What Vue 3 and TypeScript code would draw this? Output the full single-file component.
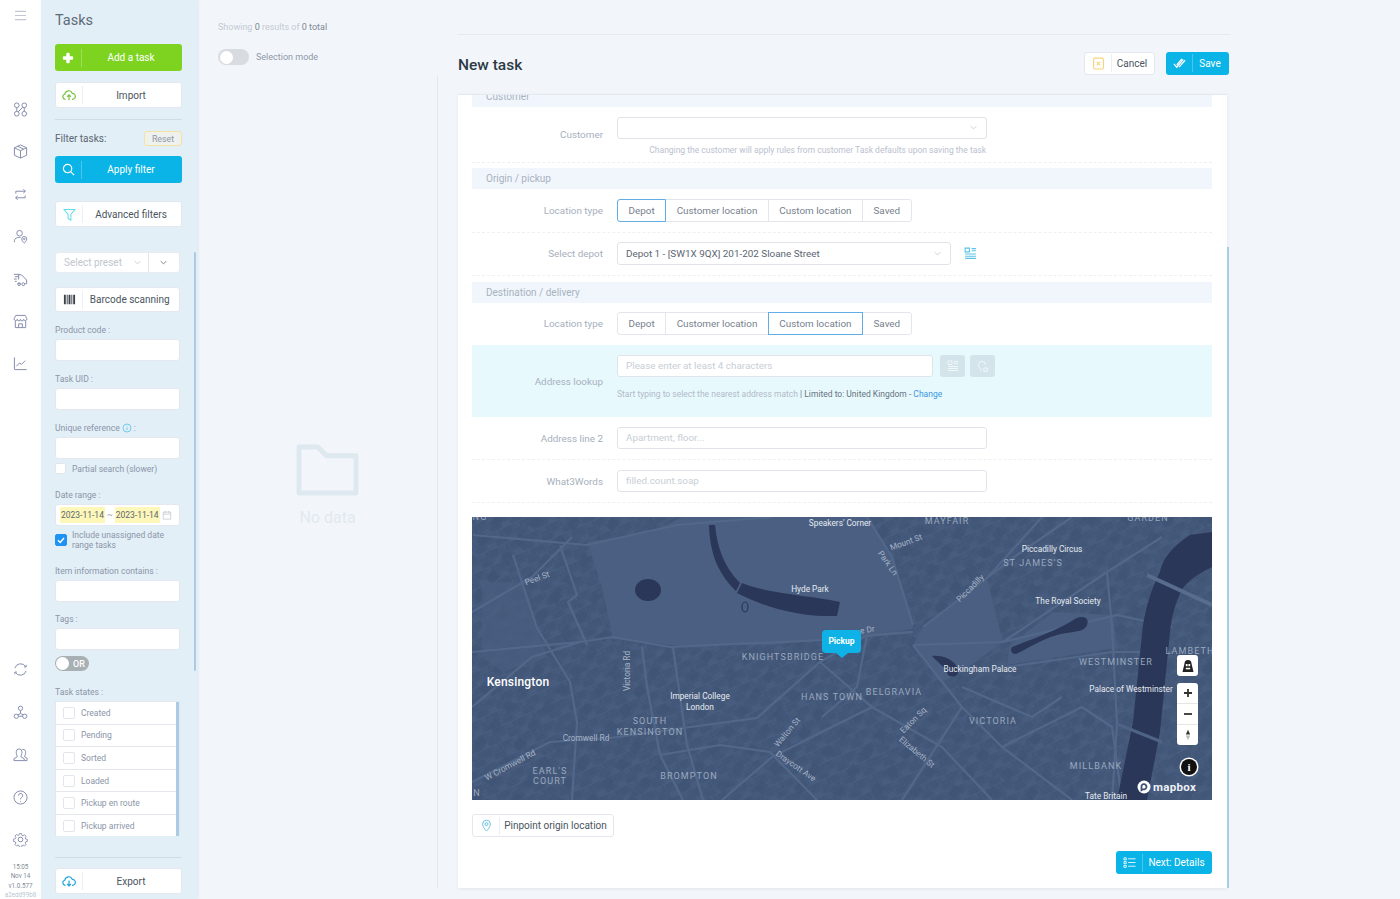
<script setup lang="ts">
interface MapLabel {
  t: string
  x: number
  y: number
  rot?: number
  kind?: 'poi' | 'area' | 'road' | 'big'
}

const states = ['Created', 'Pending', 'Sorted', 'Loaded', 'Pickup en route', 'Pickup arrived']

// Coordinates are page positions, the map starts at 472,517
const labels: MapLabel[] = [
  { t: "Speakers' Corner", x: 840, y: 523, kind: 'poi' },
  { t: 'MAYFAIR', x: 947, y: 521, kind: 'area' },
  { t: 'GARDEN', x: 1148, y: 518, kind: 'area' },
  { t: 'Mount St', x: 906, y: 542, rot: -20, kind: 'road' },
  { t: 'Piccadilly Circus', x: 1052, y: 549, kind: 'poi' },
  { t: "ST JAMES'S", x: 1033, y: 563, kind: 'area' },
  { t: 'Peel St', x: 537, y: 578, rot: -20, kind: 'road' },
  { t: 'Park Ln', x: 888, y: 563, rot: 55, kind: 'road' },
  { t: 'Piccadilly', x: 970, y: 588, rot: -45, kind: 'road' },
  { t: 'Hyde Park', x: 810, y: 589, kind: 'poi' },
  { t: 'The Royal Society', x: 1068, y: 601, kind: 'poi' },
  { t: 'ne Dr', x: 865, y: 630, rot: -10, kind: 'road' },
  { t: 'KNIGHTSBRIDGE', x: 783, y: 657, kind: 'area' },
  { t: 'LAMBETH', x: 1190, y: 651, kind: 'area' },
  { t: 'WESTMINSTER', x: 1116, y: 662, kind: 'area' },
  { t: 'Buckingham Palace', x: 980, y: 669, kind: 'poi' },
  { t: 'Victoria Rd', x: 627, y: 671, rot: -90, kind: 'road' },
  { t: 'Kensington', x: 518, y: 682, kind: 'big' },
  { t: 'Palace of Westminster', x: 1131, y: 689, kind: 'poi' },
  { t: 'Imperial College', x: 700, y: 696, kind: 'poi' },
  { t: 'London', x: 700, y: 707, kind: 'poi' },
  { t: 'HANS TOWN', x: 832, y: 697, kind: 'area' },
  { t: 'BELGRAVIA', x: 894, y: 692, kind: 'area' },
  { t: 'SOUTH', x: 650, y: 721, kind: 'area' },
  { t: 'KENSINGTON', x: 650, y: 732, kind: 'area' },
  { t: 'Cromwell Rd', x: 586, y: 738, kind: 'road' },
  { t: 'Eaton Sq', x: 913, y: 720, rot: -45, kind: 'road' },
  { t: 'VICTORIA', x: 993, y: 721, kind: 'area' },
  { t: 'Walton St', x: 787, y: 732, rot: -50, kind: 'road' },
  { t: 'Elizabeth St', x: 917, y: 752, rot: 40, kind: 'road' },
  { t: 'Draycott Ave', x: 796, y: 766, rot: 35, kind: 'road' },
  { t: 'W Cromwell Rd', x: 510, y: 765, rot: -28, kind: 'road' },
  { t: "EARL'S", x: 550, y: 771, kind: 'area' },
  { t: 'COURT', x: 550, y: 781, kind: 'area' },
  { t: 'BROMPTON', x: 689, y: 776, kind: 'area' },
  { t: 'MILLBANK', x: 1096, y: 766, kind: 'area' },
  { t: 'Tate Britain', x: 1106, y: 796, kind: 'poi' },
  { t: 'N', x: 477, y: 793, kind: 'area' },
  { t: 'NG', x: 480, y: 517, kind: 'area' }
]

const labelStyle = (l: MapLabel) => ({
  left: `${l.x - 472}px`,
  top: `${l.y - 517}px`,
  transform: `translate(-50%, -50%) rotate(${l.rot ?? 0}deg)`
})

const roads = [
  'M0,135 L108,125 L141,120 L198,130 L351,123 L441,115',
  'M201,131 L215,228 L231,283',
  'M170,130 L175,170 L188,238 L211,283',
  'M0,265 L78,225 L138,221 L211,211 L285,201 L348,145 L395,118 L441,115',
  'M188,238 L248,228 L298,235 L345,283',
  'M41,38 L65,111 L98,165 L105,205 L100,283',
  'M88,28 L105,78 L96,85 L115,128',
  'M1,18 L115,28 L205,8 L300,0',
  'M0,190 L60,140 L108,125',
  'M441,108 L420,40 L395,0',
  'M451,110 L515,61 L545,38 L600,0',
  'M441,128 L531,125 L645,98 L700,110',
  'M531,125 L635,55 L690,20',
  'M535,150 L640,135 L700,135',
  'M441,128 L490,190 L530,230 L600,283',
  'M490,170 L560,200 L590,180',
  'M530,230 L610,190 L640,210 L650,283',
  'M348,145 L400,190 L470,230 L520,283',
  'M395,118 L385,170 L350,200',
  'M0,95 L60,60 L100,20',
  'M250,283 L300,240 L400,190',
  'M430,283 L490,190',
  'M515,61 L570,0',
  'M635,55 L640,110 L645,207 L640,283'
]
</script>

<template>
  <div class="page">
    <!-- Nav -->
    <nav class="nav">
      <svg class="nav-burger" viewBox="0 0 14 12"><path d="M1 1.5h12M1 6h12M1 10.5h12" /></svg>
      <div class="nav-group">
        <svg viewBox="0 0 16 16"><circle cx="4" cy="3.5" r="2.5" /><circle cx="12" cy="3.5" r="2.5" /><circle cx="4" cy="12.5" r="2.5" /><circle cx="12" cy="12.5" r="2.5" /><path d="M4 6v4M10.5 5.5l-5 5M12 6v4" /></svg>
        <svg viewBox="0 0 16 16"><path d="M8 1l6.5 3v8L8 15l-6.5-3V4zM1.500 4L8 7.200 14.500 4M8 7.200V15M5 2.400l6.500 3.100" /></svg>
        <svg viewBox="0 0 16 16"><path d="M3 7V4.500h10M11 2.500l2.300 2-2.300 2M13 9v2.500H3M5 13.500l-2.300-2 2.300-2" /></svg>
        <svg viewBox="0 0 16 16"><circle cx="7" cy="4.500" r="3" /><path d="M1.500 14v-1.500C1.500 10 4 9 7 9h1" /><path d="M12 15s-2.700-2.300-2.700-4.300a2.700 2.700 0 0 1 5.400 0c0 2-2.700 4.300-2.700 4.300z" /><circle cx="12" cy="10.700" r=".8" /></svg>
        <svg viewBox="0 0 16 16"><path d="M1 2.500h6M2 5h4M1 7.500h3M2 10h2M6 3h3l5.500 5.500v4H13M5 12.500h3M6 3v5" /><circle cx="6.500" cy="13" r="1.500" /><circle cx="11" cy="13" r="1.500" /></svg>
        <svg viewBox="0 0 16 16"><path d="M3 1.500h10l1.800 3.500a1.600 1.600 0 0 1-3.400.6 1.700 1.700 0 0 1-3.400 0 1.700 1.700 0 0 1-3.400 0 1.600 1.600 0 0 1-3.400-.6zM2.500 7.500V14.500h11V7.500M6 14v-3.500h4V14" /></svg>
        <svg viewBox="0 0 16 16"><path d="M1.500 1.500V14.500H14.500M3.500 11l3.500-3.500 2 1.500 4-4" /></svg>
      </div>
      <div class="nav-group nav-bottom">
        <svg viewBox="0 0 16 16"><path d="M2 6.500A6.300 6.300 0 0 1 13.500 5M14 9.500A6.300 6.300 0 0 1 2.500 11" /><path d="M11.800 5.300h2.200V3M4.200 10.700H2V13" /></svg>
        <svg viewBox="0 0 16 16"><circle cx="8" cy="3.500" r="2.300" /><circle cx="3.500" cy="12" r="2.300" /><circle cx="12.500" cy="12" r="2.300" /><path d="M8 6v3M5.800 12h4.400M8 9l-2.800 1.500M8 9l2.800 1.500" /></svg>
        <svg viewBox="0 0 16 16"><path d="M1 14.500v-2l3.500-2v-1C3.500 8 3.500 6.500 3.500 5a3 3 0 0 1 6 0c0 1.500 0 3-1 4.500v1l3.500 2v2zM10 2.500a3 3 0 0 1 3.500 2.500c0 1.500 0 3-1 4.500v1l2.500 1.500v2.500h-3" /></svg>
        <svg viewBox="0 0 16 16"><circle cx="8" cy="8" r="7" /><path d="M5.800 6a2.300 2.300 0 1 1 3.400 2c-.8.500-1.200 1-1.200 2M8 11.800v.8" /></svg>
        <svg viewBox="0 0 16 16"><circle cx="8" cy="8" r="2.500" /><path d="M6.700 1h2.600l.4 2 1.400.6 1.700-1.100 1.800 1.800-1.100 1.700.6 1.400 2 .4v2.600l-2 .4-.6 1.400 1.100 1.700-1.800 1.800-1.700-1.100-1.400.6-.4 2H6.700l-.4-2-1.400-.6-1.700 1.100-1.800-1.800 1.100-1.700-.6-1.400-2-.4V7.400l2-.4.600-1.400-1.100-1.700 1.800-1.800 1.700 1.100 1.400-.6z" transform="translate(.8 .8) scale(.9)" /></svg>
      </div>
      <div class="nav-meta">
        <div>15:05</div>
        <div>Nov 14</div>
        <div>v1.0.577</div>
        <div class="nav-hash">a2edd99b8</div>
      </div>
    </nav>

    <!-- Filter sidebar -->
    <aside class="side">
      <div class="side-title">Tasks</div>
      <button class="ibtn ibtn-wide green">
        <span class="ibtn-icon"><svg viewBox="0 0 14 14"><path class="fill-white" d="M5 2a1 1 0 0 1 1-1h2a1 1 0 0 1 1 1v3h3a1 1 0 0 1 1 1v2a1 1 0 0 1-1 1H9v3a1 1 0 0 1-1 1H6a1 1 0 0 1-1-1V9H2a1 1 0 0 1-1-1V6a1 1 0 0 1 1-1h3z" /></svg></span>
        <span class="ibtn-text">Add a task</span>
      </button>
      <button class="ibtn ibtn-wide import">
        <span class="ibtn-icon icon-cloud"><svg viewBox="0 0 16 14"><path class="st-green" d="M4 12H3.500a3 3 0 0 1-.4-5.900A4.500 4.500 0 0 1 11.800 5 3.500 3.500 0 0 1 12 12h-.5M8 13V7M5.800 9L8 6.800 10.200 9" /></svg></span>
        <span class="ibtn-text">Import</span>
      </button>
      <div class="side-divider"></div>
      <div class="filter-head">
        <span>Filter tasks:</span>
        <button class="reset">Reset</button>
      </div>
      <button class="ibtn ibtn-wide blue apply">
        <span class="ibtn-icon"><svg viewBox="0 0 14 14"><circle class="st-white" cx="6" cy="6" r="4.500" /><path class="st-white" d="M9.300 9.300L13 13" /></svg></span>
        <span class="ibtn-text">Apply filter</span>
      </button>
      <button class="ibtn ibtn-wide advanced">
        <span class="ibtn-icon"><svg viewBox="0 0 14 14"><path class="st-cyan" d="M1 1.500h12L8.500 7v6l-3-1.500V7z" /></svg></span>
        <span class="ibtn-text">Advanced filters</span>
      </button>

      <div class="side-narrow">
        <div class="preset">
          <span class="preset-text">Select preset</span>
          <svg class="chev chev-light" viewBox="0 0 10 6"><path d="M1 1l4 4 4-4" /></svg>
          <span class="preset-more"><svg class="chev chev-dark" viewBox="0 0 10 6"><path d="M1 1l4 4 4-4" /></svg></span>
        </div>
        <button class="ibtn barcode">
          <span class="ibtn-icon"><svg viewBox="0 0 14 10"><path class="fill-dark" d="M1 0h2v10H1zM4 0h1v10H4zM6 0h2v10H6zM9 0h1v10H9zM11 0h2v10h-2z" /></svg></span>
          <span class="ibtn-text">Barcode scanning</span>
        </button>

        <div class="field">
          <div class="field-label">Product code<i>:</i></div>
          <div class="field-input"></div>
        </div>
        <div class="field">
          <div class="field-label">Task UID<i>:</i></div>
          <div class="field-input"></div>
        </div>
        <div class="field">
          <div class="field-label">
            Unique reference
            <svg class="info" viewBox="0 0 10 10"><circle cx="5" cy="5" r="4" /><path d="M5 4.500v2.500M5 2.700v.6" /></svg><i>:</i>
          </div>
          <div class="field-input"></div>
        </div>
        <label class="check partial"><span class="box"></span>Partial search (slower)</label>
        <div class="field date-field">
          <div class="field-label">Date range<i>:</i></div>
          <div class="field-input date-input">
            <span class="date-val">2023-11-14</span>
            <span class="date-sep">~</span>
            <span class="date-val">2023-11-14</span>
            <svg class="date-cal" viewBox="0 0 12 12"><path d="M1.500 2.500h9v8.500h-9zM1.500 5h9M4 1v2.500M8 1v2.500" /></svg>
          </div>
        </div>
        <label class="check include">
          <span class="box box-on"><svg viewBox="0 0 10 10"><path d="M2 5.200l2.200 2.200L8 3" /></svg></span>
          <span>Include unassigned date range tasks</span>
        </label>
        <div class="field item-field">
          <div class="field-label">Item information contains<i>:</i></div>
          <div class="field-input"></div>
        </div>
        <div class="field tags-field">
          <div class="field-label">Tags<i>:</i></div>
          <div class="field-input"></div>
        </div>
        <div class="or-toggle"><span class="knob"></span><span>OR</span></div>
        <div class="field states-field">
          <div class="field-label">Task states<i>:</i></div>
          <div class="states">
            <div v-for="s in states" :key="s" class="state-row">
              <span class="box"></span>{{ s }}
            </div>
            <span class="states-bar"></span>
          </div>
        </div>
      </div>

      <div class="side-divider export-divider"></div>
      <button class="ibtn ibtn-wide export">
        <span class="ibtn-icon icon-cloud"><svg viewBox="0 0 16 14"><path class="st-blue" d="M4 12H3.500a3 3 0 0 1-.4-5.900A4.500 4.500 0 0 1 11.800 5 3.500 3.500 0 0 1 12 12h-.5M8 6.500v6M5.800 10.500L8 12.700l2.200-2.200" /></svg></span>
        <span class="ibtn-text">Export</span>
      </button>
      <span class="side-scroll"></span>
    </aside>

    <!-- Results list -->
    <section class="list">
      <div class="list-count">Showing <b>0</b> results of <b>0 total</b></div>
      <div class="list-mode"><span class="toggle"><span class="knob"></span></span>Selection mode</div>
      <div class="empty">
        <svg viewBox="0 0 64 53"><path d="M3 3h19l9 9h30v38H3z" /></svg>
        <div>No data</div>
      </div>
    </section>

    <!-- Task form -->
    <main class="main">
      <div class="main-top"></div>
      <header class="main-head">
        <h1>New task</h1>
        <div class="main-actions">
          <button class="ibtn cancel">
            <span class="ibtn-icon"><svg viewBox="0 0 12 12"><rect class="st-yellow" x="1.500" y="1" width="9" height="10" rx="1" /><path class="st-yellow" d="M4.500 4.500l3 3M7.500 4.500l-3 3" /></svg></span>
            <span class="ibtn-text">Cancel</span>
          </button>
          <button class="ibtn blue save">
            <span class="ibtn-icon"><svg viewBox="0 0 14 12"><path class="st-white" d="M1 6.500L4 10 11 1.500M4 7.500L9.500 1M6.500 10L13 2.500" /></svg></span>
            <span class="ibtn-text">Save</span>
          </button>
        </div>
      </header>

      <div class="card">
        <div class="section section-clip">Customer</div>
        <div class="row row-customer">
          <label class="row-label">Customer</label>
          <div class="select select-customer">
            <svg class="chev chev-light" viewBox="0 0 10 6"><path d="M1 1l4 4 4-4" /></svg>
          </div>
        </div>
        <div class="customer-hint">Changing the customer will apply rules from customer Task defaults upon saving the task</div>
        <div class="dots dots-hint"></div>

        <div class="section">Origin / pickup</div>
        <div class="row row-type">
          <label class="row-label">Location type</label>
          <div class="segs">
            <span class="seg seg-on">Depot</span>
            <span class="seg">Customer location</span>
            <span class="seg">Custom location</span>
            <span class="seg">Saved</span>
          </div>
        </div>
        <div class="dots"></div>
        <div class="row row-depot">
          <label class="row-label">Select depot</label>
          <div class="select select-depot">
            <span>Depot 1 - [SW1X 9QX] 201-202 Sloane Street</span>
            <svg class="chev chev-light" viewBox="0 0 10 6"><path d="M1 1l4 4 4-4" /></svg>
          </div>
          <svg class="depot-list" viewBox="0 0 12 12"><path d="M1 1h4v3.500H1zM7 1.500h4M7 3.500h4M1 6.500h10M1 8.500h10M1 10.500h10" /></svg>
        </div>
        <div class="dots"></div>

        <div class="section section-dest">Destination / delivery</div>
        <div class="row row-type row-type-dest">
          <label class="row-label">Location type</label>
          <div class="segs">
            <span class="seg">Depot</span>
            <span class="seg">Customer location</span>
            <span class="seg seg-on">Custom location</span>
            <span class="seg">Saved</span>
          </div>
        </div>
        <div class="lookup">
          <label class="row-label">Address lookup</label>
          <div class="lookup-body">
            <div class="lookup-top">
              <div class="text-input lookup-input">Please enter at least 4 characters</div>
              <span class="square-btn"><svg viewBox="0 0 12 12"><path d="M1 1h4v3.500H1zM7 1.500h4M7 3.500h4M1 6.500h10M1 8.500h10M1 10.500h10" /></svg></span>
              <span class="square-btn"><svg viewBox="0 0 12 12"><path d="M5 11S1.500 7.500 1.500 4.800a3.500 3.500 0 0 1 7 0M8.500 7l.9 1.600 1.600.3-1.100 1.200.2 1.600-1.600-.7-1.600.7.2-1.600L6 8.900l1.600-.3z" /></svg></span>
            </div>
            <div class="lookup-hint">
              Start typing to select the nearest address match <em>| Limited to: United Kingdom - </em><a>Change</a>
            </div>
          </div>
        </div>
        <div class="row row-line2">
          <label class="row-label">Address line 2</label>
          <div class="text-input wide-input">Apartment, floor...</div>
        </div>
        <div class="dots"></div>
        <div class="row row-w3w">
          <label class="row-label">What3Words</label>
          <div class="text-input wide-input">filled.count.soap</div>
        </div>
        <div class="dots"></div>

        <div class="map">
          <svg class="map-svg" viewBox="0 0 740 283" preserveAspectRatio="none">
            <defs>
              <pattern id="blocks" width="22" height="15" patternUnits="userSpaceOnUse" patternTransform="rotate(-24)">
                <rect x="2" y="2" width="8" height="5" fill="#485d7e" />
                <rect x="13" y="8" width="6" height="5" fill="#465b7c" />
                <path d="M0 0H22M0 0V15M11 0V15M0 7.500H22" fill="none" stroke="#4d6285" stroke-width=".6" />
              </pattern>
              <pattern id="blocks2" width="31" height="23" patternUnits="userSpaceOnUse" patternTransform="rotate(38)">
                <path d="M0 0H31M0 0V23M15 6V23" fill="none" stroke="#4d6285" stroke-width=".6" />
                <rect x="18" y="6" width="9" height="11" fill="#3e5274" />
              </pattern>
            </defs>
            <rect width="740" height="283" fill="#425678" />
            <rect width="740" height="283" fill="url(#blocks)" />
            <rect width="740" height="283" fill="url(#blocks2)" opacity=".6" />
            <!-- parks -->
            <g fill="#4a5f81">
              <path d="M115,25 L180,15 L211,0 L395,0 L420,40 L440,100 L441,112 L360,122 L300,128 L200,128 L141,122 L130,70 Z" />
              <path d="M451,110 L515,61 L531,125 L485,158 L468,165 L441,128 Z" />
              <path d="M538,128 L581,95 L641,98 L645,131 L535,148 Z" />
              <path d="M10,65 H50 L75,140 L30,155 L10,140 Z" opacity=".6" />
            </g>
            <!-- roads -->
            <g fill="none" stroke="#52688a" stroke-width="2.200">
              <path v-for="r in roads" :key="r" :d="r" />
            </g>
            <!-- water -->
            <g fill="#2a3759">
              <ellipse cx="176" cy="73" rx="13" ry="11" />
              <path d="M237,8 L243,8 C245,30 252,50 268,66 L264,74 C248,58 238,40 237,8 Z" />
              <path d="M270,66 C300,78 340,78 368,85 L365,99 C330,100 296,92 265,76 Z" />
              <path d="M460,139 C470,138 482,142 486,152 C488,158 482,162 476,158 C474,150 466,146 460,139 Z" />
              <path d="M540,130 C560,122 585,114 603,102 C610,98 618,100 615,108 C612,116 600,114 585,118 C570,122 555,132 544,137 C539,137 538,133 540,130 Z" />
              <path d="M740,15 L718,18 C700,30 690,42 688,55 C680,70 674,90 671,108 L661,205 L645,283 L675,283 L688,215 L698,115 C700,95 705,82 711,71 C720,60 730,55 740,50 Z" />
            </g>
            <ellipse cx="273" cy="90" rx="3" ry="5" fill="none" stroke="#2a3759" stroke-width="1.200" />
            <path d="M675,58 L740,88" stroke="#586c8e" stroke-width="4" fill="none" />
            <path d="M645,207 L690,225" stroke="#4e6386" stroke-width="3" fill="none" />
          </svg>

          <span
            v-for="l in labels"
            :key="l.t + l.x"
            class="map-label"
            :class="`map-${l.kind}`"
            :style="labelStyle(l)"
          >{{ l.t }}</span>

          <div class="pickup">Pickup</div>

          <div class="map-ctl map-lock">
            <svg viewBox="0 0 14 14"><path d="M7 1C4.500 1 3.500 2.800 3.500 4.500L1.500 13h11L10.500 4.500C10.500 2.800 9.500 1 7 1z" fill="#222" /><rect x="4.800" y="5" width="1.800" height="2.200" fill="#fff" /><rect x="7.400" y="5" width="1.800" height="2.200" fill="#fff" /><rect x="4.800" y="8.800" width="4.400" height="1.500" fill="#fff" /></svg>
          </div>
          <div class="map-ctl map-zoom">
            <span class="zoom-cell"><svg viewBox="0 0 12 12"><path d="M6 2v8M2 6h8" /></svg></span>
            <span class="zoom-cell"><svg viewBox="0 0 12 12"><path d="M2 6h8" /></svg></span>
            <span class="zoom-cell"><svg viewBox="0 0 12 14"><path class="needle-up" d="M6 1l2.500 5.500h-5z" /><path class="needle-down" d="M6 13L3.500 7.500h5z" /></svg></span>
          </div>
          <span class="map-info">i</span>
          <div class="mapbox">
            <svg viewBox="0 0 14 14"><circle cx="7" cy="7" r="6.500" fill="#fff" /><path d="M4.500 10.200V5.800A2.600 2.600 0 1 1 7.500 9.300H6z" fill="none" stroke="#3e5274" stroke-width="1.800" /></svg>
            <span>mapbox</span>
          </div>
        </div>

        <button class="ibtn pinpoint">
          <span class="ibtn-icon"><svg viewBox="0 0 12 14"><path class="st-cyan2" d="M6 13S1.800 8.800 1.800 5.500a4.200 4.200 0 0 1 8.400 0C10.200 8.800 6 13 6 13z" /><circle class="st-cyan2" cx="6" cy="5.500" r="1.600" /></svg></span>
          <span class="ibtn-text">Pinpoint origin location</span>
        </button>
        <div class="card-foot">
          <button class="ibtn blue next">
            <span class="ibtn-icon"><svg viewBox="0 0 14 14"><path class="st-thin" d="M1 2h2.500v2.200H1zM1 6h2.500v2.200H1zM1 10h2.500v2.200H1zM5.500 3h8M5.500 7h8M5.500 11h8" /></svg></span>
            <span class="ibtn-text">Next: Details</span>
          </button>
        </div>
      </div>
      <span class="main-scroll"></span>
    </main>
  </div>
</template>

<style scoped>
.page {
  display: flex;
  width: 1400px;
  height: 899px;
  overflow: hidden;
  background: #f2f6fa;
  font-family: Roboto, "Liberation Sans", sans-serif;
  color: #4f5b66;
}

button {
  font-family: inherit;
  padding: 0;
  cursor: pointer;
}

svg {
  display: block;
  fill: none;
}

/* Nav */
.nav {
  position: relative;
  width: 41px;
  flex-shrink: 0;
  overflow: hidden;
  background: #fff;
  display: flex;
  flex-direction: column;
  align-items: center;
}

.nav svg {
  flex-shrink: 0;
  width: 15px;
  height: 15px;
  stroke: #858dab;
  stroke-width: 1.05;
}

.nav .nav-burger {
  margin-top: 10px;
  stroke: #c2c7d1;
  stroke-width: 1.1;
  width: 13px;
  height: 11px;
}

.nav-group {
  display: flex;
  flex-direction: column;
  flex-shrink: 0;
  gap: 27.4px;
  margin-top: 81px;
}

.nav-bottom {
  margin-top: 291px;
}

.nav-meta {
  flex-shrink: 0;
  margin-top: 16px;
  font-size: 6.3px;
  line-height: 9.5px;
  text-align: center;
  color: #7f8b96;
  white-space: nowrap;
}

.nav-hash {
  color: #b9c7d2;
}

/* Sidebar */
.side {
  position: relative;
  width: 156px;
  height: 899px;
  flex-shrink: 0;
  box-sizing: border-box;
  padding: 11px 0 0 14px;
  background: #e3eff7;
  box-shadow: 1px 0 3px rgba(120, 150, 180, 0.18);
}

.side-title {
  height: 20px;
  line-height: 20px;
  font-size: 14.5px;
  color: #5d6b76;
  margin-bottom: 13px;
}

.side-divider {
  width: 127px;
  height: 1px;
  background: #d0dbe5;
  margin-top: 11px;
}

.ibtn {
  display: flex;
  align-items: center;
  box-sizing: border-box;
  height: 26px;
  border: 1px solid #e4e8ee;
  border-radius: 3px;
  background: #fff;
  font-size: 10px;
  color: #4a5560;
}

.ibtn-wide {
  width: 127px;
}

.ibtn-icon {
  display: flex;
  align-items: center;
  justify-content: center;
  width: 26px;
  height: 18px;
  flex-shrink: 0;
  border-right: 1px solid #ebeef2;
}

.ibtn-icon svg {
  width: 13px;
  height: 13px;
}

.icon-cloud svg {
  width: 14px;
  height: 12px;
}

.green .ibtn-icon svg {
  width: 12px;
  height: 12px;
}

.ibtn-text {
  flex: 1;
  padding-right: 2px;
  text-align: center;
  white-space: nowrap;
}

.green {
  height: 27px;
  border: 0;
  background: #7ed321;
  color: #fff;
}

.blue {
  border: 0;
  background: #0ab4e6;
  color: #fff;
}

.green .ibtn-icon,
.blue .ibtn-icon {
  border-right-color: rgba(255, 255, 255, 0.25);
}

.fill-white {
  fill: #fff;
}

.fill-dark {
  fill: #3a4149;
}

.st-white {
  stroke: #fff;
  stroke-width: 1.3;
  fill: none;
}

.st-thin {
  stroke: #fff;
  stroke-width: 0.9;
  fill: none;
}

.st-green {
  stroke: #7cc243;
  stroke-width: 1.4;
}

.st-blue {
  stroke: #1fa7dc;
  stroke-width: 1.4;
}

.st-cyan {
  stroke: #63dbe6;
  stroke-width: 1.1;
}

.st-cyan2 {
  stroke: #5cbde0;
  stroke-width: 1;
}

.st-yellow {
  stroke: #f4d37c;
  stroke-width: 1;
}

.import {
  margin-top: 11px;
}

.filter-head {
  display: flex;
  align-items: center;
  justify-content: space-between;
  width: 127px;
  height: 15px;
  margin-top: 11px;
  font-size: 10px;
  color: #5a6672;
}

.reset {
  box-sizing: border-box;
  width: 38px;
  height: 15px;
  border: 1px solid #f3e3a2;
  border-radius: 3px;
  background: #eef1ee;
  font-size: 8.8px;
  color: #8e98a8;
}

.apply {
  height: 27px;
  margin-top: 10px;
}

.advanced {
  margin-top: 18px;
}

.side-narrow {
  width: 124.5px;
  margin-top: 25px;
}

.preset {
  display: flex;
  align-items: center;
  box-sizing: border-box;
  height: 21px;
  background: #fff;
  border: 1px solid #e8ecf0;
  border-radius: 3px;
  font-size: 10px;
  color: #bfc6ce;
}

.preset-text {
  flex: 1;
  padding-left: 8px;
  white-space: nowrap;
}

.preset-more {
  display: flex;
  align-items: center;
  justify-content: center;
  width: 30px;
  height: 19px;
  margin-left: 7px;
  border-left: 1px solid #e4e8ee;
}

.chev {
  width: 7px;
  height: 5px;
  stroke-width: 1;
}

.chev-light {
  stroke: #b6bec8;
}

.chev-dark {
  stroke: #4d5762;
}

.barcode {
  width: 100%;
  height: 25px;
  margin-top: 14px;
}

.field {
  margin-top: 12px;
}

.field-label {
  display: flex;
  align-items: center;
  height: 12px;
  line-height: 12px;
  margin-bottom: 3px;
  font-size: 8.6px;
  color: #8b95a8;
  white-space: nowrap;
}

.field-label i {
  font-style: normal;
  margin-left: 2px;
}

.field-input {
  box-sizing: border-box;
  height: 22px;
  background: #fff;
  border: 1px solid #e4e8ee;
  border-radius: 3px;
}

.info {
  width: 10px;
  height: 10px;
  margin-left: 2px;
  stroke: #5cc0e8;
  stroke-width: 0.8;
}

.check {
  display: flex;
  align-items: center;
  font-size: 8.5px;
  color: #8b95a8;
}

.box {
  display: inline-block;
  box-sizing: border-box;
  width: 11px;
  height: 11px;
  flex-shrink: 0;
  margin-right: 6px;
  background: #fff;
  border: 1px solid #e2e6ec;
  border-radius: 2px;
}

.partial {
  height: 13px;
  margin-top: 3px;
}

.date-field {
  margin-top: 14px;
}

.date-input {
  display: flex;
  align-items: center;
  padding-left: 4px;
  font-size: 8.5px;
  color: #5d6670;
  white-space: nowrap;
}

.date-val {
  padding: 3px 1px;
  background: #fdf7b9;
}

.date-sep {
  margin: 0 2px;
  color: #98a0aa;
}

.date-cal {
  width: 10px;
  height: 10px;
  margin-left: 2px;
  stroke: #b9c0c9;
  stroke-width: 0.8;
}

.include {
  height: 20px;
  margin-top: 4px;
  line-height: 10px;
}

.box-on {
  width: 12px;
  height: 12px;
  margin-right: 5px;
  background: #1f93f2;
  border-color: #1f93f2;
}

.box-on svg {
  stroke: #fff;
  stroke-width: 1.4;
}

.item-field {
  margin-top: 15px;
}

.tags-field {
  margin-top: 11px;
}

.or-toggle {
  display: flex;
  align-items: center;
  box-sizing: border-box;
  width: 34px;
  height: 15px;
  margin-top: 6px;
  padding-left: 1px;
  gap: 4px;
  border-radius: 8px;
  background: #a9b0b4;
  font-size: 9px;
  font-weight: 500;
  color: #fff;
}

.knob {
  display: block;
  width: 13px;
  height: 13px;
  border-radius: 50%;
  background: #fff;
}

.states-field {
  margin-top: 15px;
}

.states {
  position: relative;
  box-sizing: border-box;
  height: 135px;
  overflow: hidden;
  background: #fff;
  border: 1px solid #e4e8ee;
  border-bottom: 0;
}

.state-row {
  display: flex;
  align-items: center;
  box-sizing: border-box;
  height: 22.6px;
  padding-left: 7px;
  border-bottom: 1px solid #e4e8ee;
  font-size: 8.5px;
  color: #8b95a8;
}

.state-row .box {
  width: 12px;
  height: 12px;
}

.states-bar {
  position: absolute;
  top: 0;
  right: 0;
  bottom: 0;
  width: 3px;
  background: #a9cbe3;
}

.export-divider {
  margin-top: 21px;
}

.export {
  margin-top: 10px;
}

.side-scroll {
  position: absolute;
  top: 252px;
  right: 1px;
  width: 2px;
  height: 419px;
  border-radius: 1px;
  background: #a9cbe3;
}

/* List */
.list {
  position: relative;
  width: 240px;
  flex-shrink: 0;
  box-sizing: border-box;
  padding: 21px 0 0 21px;
}

.list-count {
  height: 12px;
  line-height: 12px;
  font-size: 9px;
  color: #c3cad3;
}

.list-count b {
  font-weight: 400;
  color: #7d8894;
}

.list-mode {
  display: flex;
  align-items: center;
  margin-top: 16px;
  font-size: 9px;
  color: #8e96a8;
}

.toggle {
  display: block;
  box-sizing: border-box;
  width: 31px;
  height: 16px;
  margin-right: 7px;
  padding: 1.5px;
  border-radius: 8px;
  background: #d8dce0;
}

.empty {
  position: absolute;
  top: 444px;
  left: 99px;
  width: 63px;
  text-align: center;
  font-size: 16px;
  color: #e1e9ef;
  white-space: nowrap;
}

.empty svg {
  width: 63px;
  height: 52px;
  margin-bottom: 12px;
  stroke: #dde8ef;
  stroke-width: 5;
  stroke-linejoin: round;
}

.empty div {
  margin-left: -10px;
  margin-right: -10px;
  height: 20px;
  line-height: 20px;
}

/* Main */
.main {
  position: relative;
  width: 792px;
  flex-shrink: 0;
  box-sizing: border-box;
  padding-left: 21px;
}

.main::before {
  content: "";
  position: absolute;
  left: 0;
  top: 76px;
  height: 812px;
  width: 1px;
  background: #e0e8ef;
}

.main-top {
  width: 772px;
  height: 1px;
  margin-top: 34px;
  background: #e4eaf0;
}

.main-head {
  display: flex;
  align-items: center;
  justify-content: space-between;
  box-sizing: border-box;
  width: 771px;
  height: 59px;
}

.main-head h1 {
  margin: 0;
  font-size: 15.5px;
  font-weight: 500;
  color: #2d3a46;
}

.main-actions {
  display: flex;
  gap: 11px;
  margin-bottom: 3px;
}

.cancel {
  width: 71px;
  height: 23px;
}

.save {
  width: 63px;
  height: 23px;
}

.card {
  box-sizing: border-box;
  width: 769px;
  height: 794px;
  overflow: hidden;
  padding: 0 15px 0 14px;
  background: #fff;
  border-top: 1px solid #e3e9ef;
  box-shadow: 0 1px 3px rgba(130, 150, 170, 0.15);
}

.section {
  height: 21px;
  line-height: 21px;
  padding-left: 14px;
  background: #f1f6fc;
  font-size: 10px;
  color: #a8b2bf;
}

.section-clip {
  margin-top: -9px;
}

.row {
  display: flex;
  align-items: center;
}

.row-label {
  width: 131px;
  flex-shrink: 0;
  margin-right: 14px;
  text-align: right;
  font-size: 9.9px;
  color: #a7afbd;
  white-space: nowrap;
}

.row-customer {
  height: 22px;
  margin-top: 10px;
}

.row-customer .row-label {
  padding-top: 12px;
}

.select {
  display: flex;
  align-items: center;
  justify-content: space-between;
  box-sizing: border-box;
  height: 22px;
  padding: 0 9px 1px 8px;
  background: #fff;
  border: 1px solid #e0e4ea;
  border-radius: 3px;
  font-size: 9.9px;
  color: #5b6672;
}

.select-customer {
  width: 370px;
  justify-content: flex-end;
}

.customer-hint {
  width: 514px;
  margin-top: 6px;
  height: 11px;
  line-height: 11px;
  text-align: right;
  font-size: 8.5px;
  color: #bbc1cf;
  white-space: nowrap;
}

.dots {
  height: 0;
  margin-top: 10px;
  border-top: 1px dashed #eef1f4;
}

.dots-hint {
  margin-top: 6px;
  margin-bottom: 5px;
}

.row-type {
  margin-top: 10px;
}

.segs {
  display: flex;
  height: 23px;
  font-size: 9.9px;
  color: #77818e;
}

.seg {
  display: flex;
  align-items: center;
  box-sizing: border-box;
  padding: 0 10.5px 1px;
  background: #fff;
  border: 1px solid #e3e6ec;
  margin-left: -1px;
  white-space: nowrap;
}

.seg:first-child {
  margin-left: 0;
  border-radius: 3px 0 0 3px;
}

.seg:last-child {
  border-radius: 0 3px 3px 0;
}

.seg-on {
  position: relative;
  z-index: 1;
  border-color: #62ade6;
}

.row-depot {
  margin-top: 9px;
}

.row-depot .row-label {
  padding-bottom: 1px;
}

.select-depot {
  width: 334px;
  height: 23px;
}

.depot-list {
  width: 13px;
  height: 13px;
  margin-left: 13px;
  stroke: #5cc3e6;
  stroke-width: 1;
}

.section-dest {
  margin-top: 6px;
}

.row-type-dest {
  margin-top: 9px;
}

.lookup {
  display: flex;
  align-items: center;
  box-sizing: border-box;
  height: 72px;
  margin-top: 10px;
  background: #e7f9fd;
}

.lookup-body {
  align-self: flex-start;
  padding-top: 10px;
}

.lookup-top {
  display: flex;
  align-items: center;
}

.text-input {
  display: flex;
  align-items: center;
  box-sizing: border-box;
  height: 22px;
  padding: 0 0 1px 8px;
  background: #fff;
  border: 1px solid #e0e4ea;
  border-radius: 3px;
  font-size: 9.9px;
  color: #c9ced6;
}

.lookup-input {
  width: 316px;
}

.square-btn {
  display: flex;
  align-items: center;
  justify-content: center;
  width: 25px;
  height: 22px;
  margin-left: 7px;
  border-radius: 3px;
  background: #d3e4ea;
}

.square-btn + .square-btn {
  margin-left: 5px;
}

.square-btn svg {
  width: 12px;
  height: 12px;
  stroke: #f2f8fa;
  stroke-width: 0.9;
}

.lookup-hint {
  margin-top: 12px;
  height: 11px;
  line-height: 11px;
  font-size: 8.5px;
  color: #b2bac8;
  white-space: nowrap;
}

.lookup-hint em {
  font-style: normal;
  color: #677380;
}

.lookup-hint a {
  color: #3d97e0;
}

.row-line2 {
  margin-top: 10px;
}

.wide-input {
  width: 370px;
}

.row-w3w {
  margin-top: 10px;
}

.map {
  position: relative;
  height: 283px;
  margin-top: 14px;
  overflow: hidden;
  background: #425678;
}

.map-svg {
  position: absolute;
  inset: 0;
  width: 100%;
  height: 100%;
}

.map-label {
  position: absolute;
  white-space: nowrap;
  font-size: 8.3px;
  line-height: 10px;
}

.map-poi {
  color: #e6ebf1;
}

.map-road {
  color: #a5b3c6;
}

.map-area {
  color: #9aa9be;
  font-size: 9px;
  letter-spacing: 1.1px;
}

.map-big {
  color: #fff;
  font-size: 12px;
  font-weight: 500;
  letter-spacing: 0.2px;
}

.pickup {
  position: absolute;
  left: 350px;
  top: 113px;
  width: 39px;
  height: 23px;
  line-height: 23px;
  text-align: center;
  border-radius: 4px;
  background: #0fb2e6;
  color: #fff;
  font-size: 8.5px;
  font-weight: 700;
}

.pickup::after {
  content: "";
  position: absolute;
  left: 14px;
  bottom: -5px;
  border-left: 6px solid transparent;
  border-right: 6px solid transparent;
  border-top: 5px solid #0fb2e6;
}

.map-ctl {
  position: absolute;
  left: 705px;
  width: 21px;
  background: #fff;
  border-radius: 3px;
}

.map-lock {
  top: 138px;
  height: 21px;
  display: flex;
  align-items: center;
  justify-content: center;
}

.map-lock svg {
  width: 14px;
  height: 14px;
}

.map-zoom {
  top: 166px;
  height: 62px;
  display: flex;
  flex-direction: column;
}

.zoom-cell {
  flex: 1;
  display: flex;
  align-items: center;
  justify-content: center;
  border-bottom: 1px solid #e5e5e5;
}

.zoom-cell:last-child {
  border-bottom: 0;
}

.zoom-cell svg {
  width: 12px;
  height: 12px;
  stroke: #333;
  stroke-width: 1.8;
}

.needle-up {
  fill: #333;
  stroke: none;
}

.needle-down {
  fill: #bbb;
  stroke: none;
}

.map-info {
  position: absolute;
  left: 709px;
  top: 242px;
  width: 16px;
  height: 16px;
  line-height: 16px;
  border-radius: 50%;
  background: #111;
  box-shadow: 0 0 0 1.5px #fff;
  color: #fff;
  text-align: center;
  font-size: 11px;
  font-weight: 900;
  font-family: "Liberation Serif", serif;
}

.mapbox {
  position: absolute;
  left: 665px;
  top: 263px;
  display: flex;
  align-items: center;
  gap: 2px;
  color: #eef1f5;
  font-size: 11.5px;
  font-weight: 700;
  letter-spacing: 0.3px;
}

.mapbox svg {
  width: 14px;
  height: 14px;
}

.pinpoint {
  width: 142px;
  height: 23px;
  margin-top: 14px;
}

.card-foot {
  display: flex;
  justify-content: flex-end;
  margin-top: 14px;
}

.next {
  width: 96px;
  height: 23px;
}

.main-scroll {
  position: absolute;
  left: 790px;
  top: 247px;
  width: 2px;
  height: 641px;
  background: #a9cbe3;
}
</style>

<style>
html,
body {
  margin: 0;
  background: #f2f6fa;
  overflow: hidden;
}
</style>
